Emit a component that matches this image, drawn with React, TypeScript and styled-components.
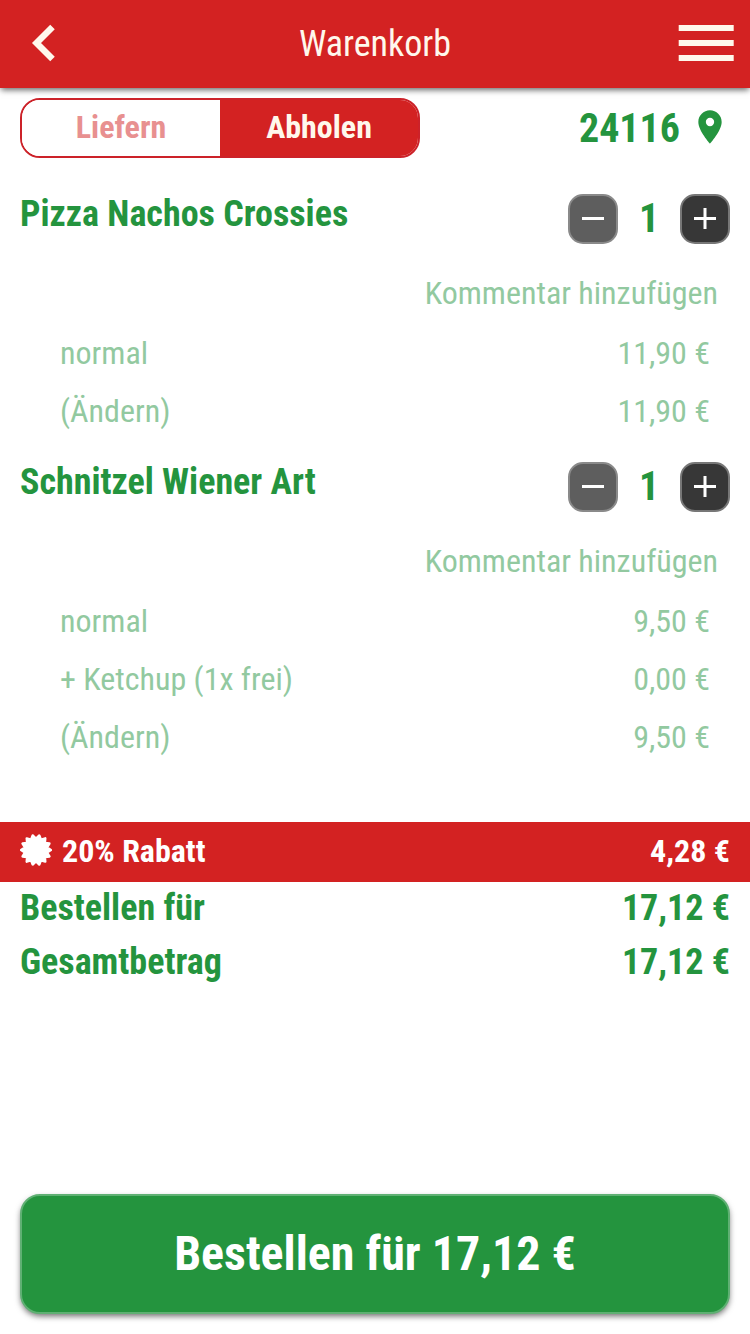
import React from 'react';
import styled, { createGlobalStyle } from 'styled-components';

const red = '#d32222';
const green = '#24943e';
const paleGreen = '#92c9a0';

const GlobalStyle = createGlobalStyle`
  * { box-sizing: border-box; }
  body {
    margin: 0;
    background: #fff;
    color: ${green};
    font-family: 'Roboto Condensed', Roboto, 'Liberation Sans', sans-serif;
    font-stretch: 75%;
  }
  button { font: inherit; font-stretch: inherit; color: inherit; padding: 0; border: 0; background: none; }
`;

const Screen = styled.div`
  display: flex;
  flex-direction: column;
  height: 1334px;
  overflow: hidden;
`;

const Header = styled.header`
  display: grid;
  grid-template-columns: 72px 1fr 72px;
  align-items: center;
  flex: none;
  height: 88px;
  background: ${red};
  color: #fff8ec;
  box-shadow: 0 3px 6px -1px rgba(0, 0, 0, 0.6);
`;

const Title = styled.h1`
  margin: 0;
  text-align: center;
  font-size: 36px;
  font-weight: 400;
  line-height: 88px;
`;

const HeaderButton = styled.button`
  display: flex;
  height: 88px;
`;

const ModeBar = styled.div`
  display: flex;
  justify-content: space-between;
  align-items: center;
  flex: none;
  height: 60px;
  margin: 10px 20px 36px;
`;

const Toggle = styled.div`
  display: flex;
  width: 400px;
  height: 60px;
  border: 2px solid #cc2229;
  border-radius: 20px;
  overflow: hidden;
`;

const ToggleOption = styled.button<{ $active?: boolean }>`
  flex: 1;
  height: 56px;
  padding-bottom: 2px;
  font-size: 32px;
  font-weight: 700;
  line-height: 54px;
  background: ${(p) => (p.$active ? red : '#fff')};
  color: ${(p) => (p.$active ? '#fff8ec' : '#e89090')};
`;

const Location = styled.div`
  display: flex;
  align-items: center;
  gap: 10px;
  font-size: 40px;
  font-weight: 700;
`;

const Item = styled.section`
  flex: none;
  margin: 0 20px 22px;
`;

const ItemHead = styled.div`
  display: flex;
  justify-content: space-between;
  height: 70px;
`;

const ItemName = styled.h2`
  margin: 0;
  font-size: 36px;
  font-weight: 700;
  line-height: 40px;
`;

const Stepper = styled.div`
  display: grid;
  grid-template-columns: 50px 62px 50px;
  height: 50px;
`;

const StepButton = styled.button<{ $muted?: boolean }>`
  display: flex;
  align-items: center;
  justify-content: center;
  height: 50px;
  border: 2px solid ${(p) => (p.$muted ? '#8a8a8a' : '#777')};
  border-radius: 15px;
  background: ${(p) => (p.$muted ? '#5e5e5e' : '#373737')};
`;

const Count = styled.span`
  font-size: 40px;
  font-weight: 700;
  line-height: 50px;
  text-align: center;
`;

const Comment = styled.div`
  height: 60px;
  padding-right: 12px;
  text-align: right;
  font-size: 32px;
  line-height: 58px;
  color: ${paleGreen};
`;

const Line = styled.div`
  display: flex;
  justify-content: space-between;
  height: 58px;
  padding: 0 20px 0 40px;
  font-size: 32px;
  line-height: 58px;
  color: ${paleGreen};
`;

const Discount = styled.div`
  display: flex;
  align-items: flex-start;
  flex: none;
  height: 60px;
  margin-top: 34px;
  padding: 0 20px;
  background: ${red};
  color: #fff;
  font-size: 32px;
  font-weight: 700;
  line-height: 58px;
`;

const DiscountLabel = styled.span`
  flex: 1;
  padding-left: 10px;
`;

const Total = styled.div`
  display: flex;
  justify-content: space-between;
  flex: none;
  height: 54px;
  padding: 0 20px;
  font-size: 36px;
  font-weight: 700;
  line-height: 52px;
`;

const OrderButton = styled.button`
  flex: none;
  height: 120px;
  margin: auto 20px 20px;
  border: 2px solid #5fb073;
  border-radius: 20px;
  background: ${green};
  color: #fff;
  font-size: 48px;
  font-weight: 700;
  line-height: 114px;
  box-shadow: 0 3px 6px -1px rgba(0, 0, 0, 0.6);
`;

const BackIcon = () => (
  <svg width="72" height="88" fill="none" stroke="#fff8ec" strokeWidth="6.4">
    <path d="M52.5 27 36.5 43 52.5 59" />
  </svg>
);

const MenuIcon = () => (
  <svg width="72" height="88" fill="#fff8ec">
    <path d="M.7 25h55v6h-55zM.7 40h55v6h-55zM.7 55h55v6h-55z" />
  </svg>
);

const PinIcon = () => (
  <svg width="40" height="40" viewBox="0 0.6 24 24" fill={green}>
    <path d="M12 2C8.13 2 5 5.13 5 9c0 5.25 7 13 7 13s7-7.75 7-13c0-3.87-3.13-7-7-7zm0 9.5a2.5 2.5 0 1 1 0-5 2.5 2.5 0 0 1 0 5z" />
  </svg>
);

const StepIcon = ({ plus }: { plus?: boolean }) => (
  <svg width="46" height="46" stroke="#fff" strokeWidth="3">
    <path d={plus ? 'M12 22.5h22M23 12v21' : 'M12 22.5h22'} />
  </svg>
);

const sealPoints = Array.from({ length: 28 }, (_, i) => {
  const r = i % 2 ? 11.4 : 14.9;
  const a = (i * Math.PI) / 14;
  return `${(16 + r * Math.cos(a)).toFixed(2)},${(28 + r * Math.sin(a)).toFixed(2)}`;
}).join(' ');

const SealIcon = () => (
  <svg width="32" height="60" fill="#fff" stroke="#fff" strokeWidth="2.4" strokeLinejoin="round">
    <polygon points={sealPoints} />
  </svg>
);

const items = [
  { name: 'Pizza Nachos Crossies', lines: [['normal', '11,90 €'], ['(Ändern)', '11,90 €']] },
  { name: 'Schnitzel Wiener Art', lines: [['normal', '9,50 €'], ['+ Ketchup (1x frei)', '0,00 €'], ['(Ändern)', '9,50 €']] },
];

export default function App() {
  return (
    <Screen>
      <GlobalStyle />
      <Header>
        <HeaderButton aria-label="Zurück"><BackIcon /></HeaderButton>
        <Title>Warenkorb</Title>
        <HeaderButton aria-label="Menü"><MenuIcon /></HeaderButton>
      </Header>
      <ModeBar>
        <Toggle>
          <ToggleOption>Liefern</ToggleOption>
          <ToggleOption $active>Abholen</ToggleOption>
        </Toggle>
        <Location>24116<PinIcon /></Location>
      </ModeBar>
      {items.map((item) => (
        <Item key={item.name}>
          <ItemHead>
            <ItemName>{item.name}</ItemName>
            <Stepper>
              <StepButton $muted aria-label="Weniger"><StepIcon /></StepButton>
              <Count>1</Count>
              <StepButton aria-label="Mehr"><StepIcon plus /></StepButton>
            </Stepper>
          </ItemHead>
          <Comment>Kommentar hinzufügen</Comment>
          {item.lines.map(([label, price]) => (
            <Line key={label}><span>{label}</span><span>{price}</span></Line>
          ))}
        </Item>
      ))}
      <Discount>
        <SealIcon />
        <DiscountLabel>20% Rabatt</DiscountLabel>
        <span>4,28 €</span>
      </Discount>
      <Total><span>Bestellen für</span><span>17,12 €</span></Total>
      <Total><span>Gesamtbetrag</span><span>17,12 €</span></Total>
      <OrderButton>Bestellen für 17,12 €</OrderButton>
    </Screen>
  );
}
